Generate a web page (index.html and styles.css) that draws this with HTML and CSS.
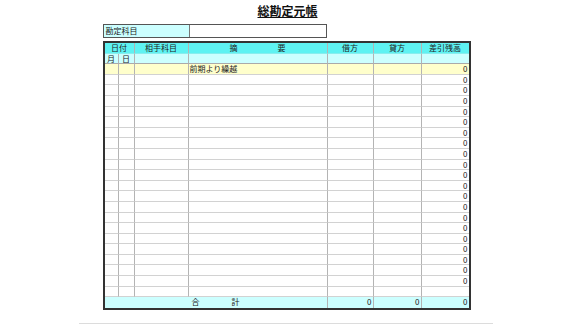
FILE: index.html
```html
<!DOCTYPE html>
<html lang="ja">
<head>
<meta charset="utf-8">
<link rel="stylesheet" href="styles.css">
</head>
<body>
<div class="page">
  <h1 class="title">総勘定元帳</h1>
  <div class="account">
    <div class="account-label">勘定科目</div>
    <div class="account-value"></div>
  </div>
  <div class="ledger">
    <div class="c h1 span2 center">日付</div>
    <div class="c h1 center">相手科目</div>
    <div class="c h1 center wide">摘　　　　　要</div>
    <div class="c h1 center">借方</div>
    <div class="c h1 center">貸方</div>
    <div class="c h1 center last">差引残高</div>

    <div class="c h2 center">月</div>
    <div class="c h2 center">日</div>
    <div class="c h2"></div>
    <div class="c h2"></div>
    <div class="c h2"></div>
    <div class="c h2"></div>
    <div class="c h2 last"></div>

    <div class="c y"></div>
    <div class="c y"></div>
    <div class="c y"></div>
    <div class="c y">前期より繰越</div>
    <div class="c y"></div>
    <div class="c y"></div>
    <div class="c y num last">0</div>
  </div>
  <div class="rule"></div>
</div>
<script src="rows.js"></script>
</body>
</html>
```

FILE: rows.js
```js
(function () {
  var ledger = document.querySelector('.ledger');
  function cell(cls, text) {
    var d = document.createElement('div');
    d.className = 'c ' + cls;
    if (text !== undefined) d.textContent = text;
    ledger.appendChild(d);
  }
  for (var i = 0; i < 21; i++) {
    for (var j = 0; j < 6; j++) cell('b');
    cell('b num last', i < 20 ? '0' : '');
  }
  cell('t span4 center', '合　　　　計');
  cell('t num', '0');
  cell('t num', '0');
  cell('t num last', '0');
})();
```

FILE: styles.css
```css
html, body {
  margin: 0;
  padding: 0;
  background: #ffffff;
}
body {
  font-family: "Noto Sans CJK JP", "Noto Sans", sans-serif;
  color: #222;
}
.page {
  width: 368px;
  margin: 0 auto;
  padding-top: 4px;
}
.title {
  margin: 0;
  height: 20px;
  font-size: 12px;
  line-height: 14px;
  font-weight: bold;
  text-align: center;
  text-decoration: underline;
  text-underline-offset: 1px;
  color: #111;
  padding-left: 2px;
}
.account {
  display: flex;
  width: 224px;
  height: 14px;
  box-sizing: border-box;
  border: 1px solid #555;
  font-size: 8px;
  line-height: 12px;
}
.account-label {
  width: 86px;
  background: #ccffff;
  border-right: 1px solid #777;
  padding-left: 2px;
  box-sizing: border-box;
}
.account-value {
  flex: 1;
}
.ledger {
  margin-top: 3px;
  display: grid;
  grid-template-columns: 14px 16px 54px 139px 46px 48px 47px;
  grid-auto-rows: 10.6px;
  border: 2px solid #333;
  font-size: 8px;
  line-height: 10px;
}
.c {
  box-sizing: border-box;
  border-right: 1px solid #b4b4b4;
  border-bottom: 1px solid #d2d2d2;
  padding: 0 1px;
  white-space: nowrap;
  overflow: hidden;
}
.last {
  border-right: none;
}
.h1 {
  background: #5ef2f2;
  border-bottom: 1px solid #8ee;
}
.h2 {
  background: #ccffff;
  border-bottom: 1px solid #aaa;
}
.y {
  background: #ffffcc;
}
.b {
  background: #ffffff;
}
.t {
  background: #ccffff;
  border-bottom: none;
}
.span2 { grid-column: span 2; }
.span4 { grid-column: span 4; }
.center { text-align: center; }
.num { text-align: right; }
.rule {
  width: 414px;
  height: 1px;
  background: #dcdcdc;
  margin: 13px 0 0 -24px;
}
```
